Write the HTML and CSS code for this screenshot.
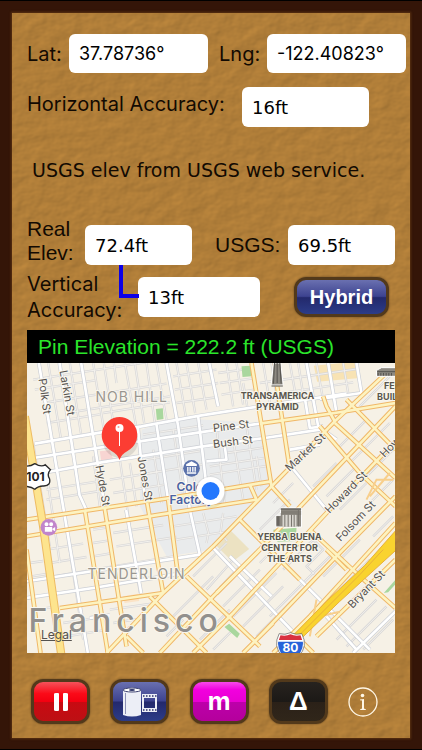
FILE: index.html
```
<!DOCTYPE html>
<html lang="en">
<head>
    <meta charset="UTF-8">
    <meta name="viewport" content="width=device-width, initial-scale=1.0">
    <title>Elevation</title>
    <link rel="stylesheet" href="styles.css">
</head>
<body>
<main class="board">
    <svg class="texture" aria-hidden="true">
        <filter id="leather" x="0" y="0" width="100%" height="100%" color-interpolation-filters="sRGB">
            <feTurbulence type="fractalNoise" baseFrequency="0.06 0.08" numOctaves="3" seed="4" result="noise"/>
            <feDiffuseLighting in="noise" lighting-color="#d99b46" surfaceScale="0.5" diffuseConstant="1">
                <feDistantLight azimuth="225" elevation="54"/>
            </feDiffuseLighting>
        </filter>
        <rect width="100%" height="100%" filter="url(#leather)"/>
    </svg>

    <form class="readings">
        <div class="row row-position">
            <label class="label-lat" for="lat">Lat:</label>
            <input class="system" type="text" id="lat" value="37.78736°" readonly>
            <label class="label-lng" for="lng">Lng:</label>
            <input class="system" type="text" id="lng" value="-122.40823°" readonly>
        </div>
        <div class="row row-horizontal">
            <label for="hacc">Horizontal Accuracy:</label>
            <input type="text" id="hacc" value="16ft" readonly>
        </div>
        <p class="message">USGS elev from USGS web service.</p>
        <div class="row row-elevation">
            <label class="label-real" for="real">Real<br>Elev:</label>
            <input type="text" id="real" value="72.4ft" readonly>
            <label class="label-usgs" for="usgs">USGS:</label>
            <input type="text" id="usgs" value="69.5ft" readonly>
        </div>
        <div class="row row-vertical">
            <span class="connector"></span>
            <label for="vacc">Vertical<br>Accuracy:</label>
            <input type="text" id="vacc" value="13ft" readonly>
            <button type="button" class="btn blue hybrid">Hybrid</button>
        </div>
    </form>

    <div class="pin-bar">Pin Elevation = 222.2 ft (USGS)</div>

    <div class="map">
        <svg class="map-canvas" viewBox="0 0 369 290" preserveAspectRatio="xMidYMid slice" role="img" aria-label="Map of San Francisco">
            <defs>
                <g id="alleys">
                    <path d="M65 0l38 225M130 0l34 215M200 0l32 200M232 0l30 190M262 0l8 60M295 0l34 190M325 0l28 180M360 0l25 180M390 0l30 170M450 0l28 160M480 0l26 150M515 0l25 140M600 0l20 130M630 0l20 125M650 60l12 70M710 0l20 120M735 0l18 115M790 0l20 110M815 0l16 100M870 0l18 100M950 0l15 90"/>
                    <path d="M20 50l390-60M25 80l180-28M50 120l370-58M120 150l310-50M60 180l160-26M230 150l200-32M440 40l130-20M445 80l130-20M450 120l125-18M580 60l100-14M585 95l105-16M700 60l290-42M700 100l280-42M575 30l100-14"/>
                    <path d="M20 240l50 310M60 330l40 270M110 430l60 400M200 280l20 150M280 290l60 400M310 300l20 130M380 260l25 160M440 200l34 220M500 330l20 110M570 190l24 230M620 230l30 180M660 190l30 190M690 280l14 90"/>
                    <path d="M60 380l150-24M60 410l160-26M250 350l160-26M260 390l160-26M370 330l160-26M360 290l160-26M550 310l170-26M550 335l170-26M600 270l110-16M350 215l180-28M60 560l110-18M70 600l110-18M80 640l360-60M260 510l150-24M270 550l180-28M200 500l40-6M200 540l45-7M200 580l60-10M440 490l190-30M450 530l150-24M110 780l90-14M120 820l110-18M250 740l140-20M260 780l100-16M30 740l60-10M10 600l40-6M15 640l45-7"/>
                    <path d="M530 450l16 60-6 30M590 450l-8 60 20 24M500 640l100-100M540 680l80-90 20 20-60 64M500 700l60-60M590 730l110-110M620 760l130-130M440 760l60-60M470 790l90-90M420 820l50-50M650 790l120-120M690 820l140-140M730 760l120-120M520 830l90-90M560 860l60-60M700 600l60-60M770 620l90-90 30 30-50 50 24 24M820 670l90-90M700 500l90-90M740 420l60-60M860 370l70-70M900 400l90-90M940 440l80-80M930 260l90-90M970 300l120-120M1020 340l80-80M1000 130l100-100M890 640l110-110M940 680l90-90M930 830l120-120M960 850l120-120M1010 860l90-90M850 790l60-60M1030 420l70-70M1040 520l60-60"/>
                </g>
                <g id="streets">
                    <path d="M37 0L104 396 184 870M99 0L159 396 179 440M164 0L229 396 234 431M299 441L344 691M334 190L354 396 362 420M420 0L455 190 490 440 520 575M390 185L425 410M515 160L540 370M548 0L575 130M840 0L875 190M905 0L930 150M990 0L1005 90 880 108M835 105L850 195 890 190"/>
                    <path d="M25 242L225 208 345 190 520 158 700 130 960 92M20 285L340 235 540 205 700 182M30 333L225 298 530 250 715 225 880 200M540 295L600 290 595 250M790 260L880 245M0 655L520 575M0 705L200 675 470 630M190 765L250 757"/>
                    <path d="M560 555L860 870M785 300L900 440M820 650L1030 860M735 700L610 580M980 870L1107 745M900 760L990 860M875 190L930 230"/>
                </g>
                <g id="roads">
                    <path d="M0 470L430 405 735 355M0 520L400 455 690 410 670 365M100 735L410 690M700 182L925 150 1107 120M0 560L42 870"/>
                    <path d="M175 440L244 870M234 431L284 751 300 850M362 420L410 690M425 410L455 640M675 0L735 370M752 70L790 320M755 60L745 0"/>
                    <path d="M240 870L410 690 560 550 735 370 930 170 1090 20M400 870L560 700 690 570 850 400 1107 130M500 870L620 750 900 450 1107 235M690 830L920 590 1107 400M650 870L740 780M740 870L850 760 1107 480M870 820L1107 590"/>
                    <path d="M370 700L540 870M480 640L700 850M640 470L820 650M735 370L790 430M850 500L1000 640M880 190L1000 330 1107 430M925 180L1107 345M925 175L900 130 890 100M960 110L1107 260M300 820L350 870M1000 640L1107 735M830 840L860 870M570 690L700 560M900 560L960 620"/>
                </g>
            </defs>
            <g transform="scale(0.33333)">
                <!-- areas -->
                <rect width="1110" height="870" fill="#f6f1e6"/>
                <path fill="#e9ebec" d="M345 200L450 165 700 180 740 360 650 470 560 560 420 580 340 430Z"/>
                <path fill="#f0f0ec" d="M560 560L740 370 820 430 680 600Z"/>
                <path fill="#f8e3b4" d="M862 8l125-12 5 50-120 10z"/>
                <path fill="#ece2c2" d="M610 500l58 58-50 38-48-48z"/>
                <path fill="#f8d5d2" d="M220 265l30-3 10 26-36 5z"/>
                <path fill="#fbe3c6" d="M290 700l45-8 3 22-44 6z"/>
                <use href="#alleys" class="alley-casing"/>
                <use href="#alleys" class="alley-fill"/>
                <path fill="#a9d79e" d="M645 10l27-2 3 32-27 2zM388 138l21-2 2 32-20 3zM594 792l14-10 32 30-8 13zM740 500l70-6-2 40-55 2zM1072 690l35-40v14l-22 24z"/>
                <use href="#streets" class="street-casing"/>
                <use href="#streets" class="street-fill"/>
                <use href="#roads" class="road-casing"/>
                <use href="#roads" class="road-fill"/>
                <!-- main roads -->
                <path class="avenue-casing" d="M-5 160L50 490 105 880"/>
                <path class="avenue" d="M-5 160L50 490 105 880"/>
                <path class="ramp" d="M870 710l-20 110M880 760l60-14M1020 410l30-60 50 0M1030 400l60-70"/>
                <path fill="#f9d32f" stroke="#e8b03a" stroke-width="3" d="M768 850L900 715 1015 607 1110 500V560L940 715 800 850Z"/>
                <path fill="none" stroke="#e8b03a" stroke-width="3" d="M785 850L1000 635 1070 560"/>
                <!-- landmarks -->
                <g fill="#8d8981" stroke="#fff" stroke-width="3">
                    <path d="M741 0h22l7 66h-36z"/>
                    <path d="M1050 22l15-8h45v26h-60z"/>
                    <path d="M748 457h14v-22h63v57h-77z"/>
                </g>
                <path stroke="#55534f" stroke-width="3" fill="none" d="M752 0v60M744 0l-3 62M760 0l4 62M735 69h34M1052 26h55M1055 30v8M1063 30v8M1071 30v8M1079 30v8M1087 30v8M1095 30v8M762 438h62M752 460v28M757 460v28"/>
                <path fill="#d9d6cf" d="M768 455h42v36h-42z"/>
                <path stroke="#77736c" stroke-width="3" d="M775 455v36M785 455v36M795 455v36M803 455v36M764 447h60M762 453h62M816 440v50"/>
                <circle cx="495" cy="316" r="25" fill="#5b72ab"/>
                <path fill="#fff" d="M479 309v-5l16-9 16 9v5zM482 312h4v14h-4zM489 312h4v14h-4zM497 312h4v14h-4zM504 312h4v14h-4zM481 328h28v4h-28z"/>
                <circle cx="67" cy="493" r="25" fill="#c185cb"/>
                <path fill="#fff" d="M55 492h22v14H55zM78 497l8-5v13l-8-5zM54 484a6 6 0 1 0 12 0a6 6 0 1 0-12 0zM68 484a6 6 0 1 0 12 0a6 6 0 1 0-12 0z"/>
                <!-- route shields -->
                <path fill="#fff" stroke="#2b2b2b" stroke-width="4" d="M-20 305Q5 315 25 302Q45 314 56 305L72 320Q60 333 69 347Q74 368 52 369Q36 368 25 379Q10 368-20 370Z"/>
                <path fill="#fff" stroke="#5b5b5b" stroke-width="2" d="M758 812Q776 817 792 809Q808 817 826 812Q846 850 816 880H768Q738 850 758 812Z"/>
                <path fill="#d9303f" d="M762 817Q778 821 792 814Q806 821 822 817L827 831H757Z"/>
                <path fill="#2763d9" d="M755 836H829Q832 860 813 880H771Q752 860 755 836Z"/>
            </g>
            <g class="street-name">
                <text transform="translate(12 16) rotate(82)">Polk St</text>
                <text transform="translate(33 8) rotate(80)">Larkin St</text>
                <text transform="translate(69 103) rotate(80)">Hyde St</text>
                <text transform="translate(111 94) rotate(80)">Jones St</text>
                <text transform="translate(187 69) rotate(-7)">Pine St</text>
                <text transform="translate(187 85) rotate(-7)">Bush St</text>
                <text transform="translate(263 109) rotate(-43)">Market St</text>
                <text transform="translate(303 151) rotate(-45)">Howard St</text>
                <text transform="translate(314 179) rotate(-46)">Folsom St</text>
                <text transform="translate(326 246) rotate(-46)">Bryant St</text>
                <text transform="translate(358 95) rotate(-45)">Howard St</text>
            </g>
            <g class="district">
                <text x="69" y="39">NOB HILL</text>
                <text x="61" y="216">TENDERLOIN</text>
            </g>
            <g class="landmark">
                <text x="251" y="36">TRANSAMERICA</text>
                <text x="251" y="47">PYRAMID</text>
                <text x="263" y="177">YERBA BUENA</text>
                <text x="263" y="188">CENTER FOR</text>
                <text x="263" y="199">THE ARTS</text>
                <text x="372" y="26">FERRY</text>
                <text x="372" y="37">BUILDING</text>
            </g>
            <g class="museum">
                <text x="150" y="128">Color</text>
                <text x="143" y="141">Factory</text>
            </g>
            <text class="route" x="9" y="118">101</text>
            <text class="route light" x="264" y="289">80</text>
            <text class="city" x="2" y="269">Francisco</text>
            <!-- current position -->
            <circle cx="184" cy="129" r="16" fill="#000" opacity="0.06"/>
            <circle cx="184" cy="128" r="14" fill="#fff"/>
            <circle cx="184" cy="128" r="9" fill="#2478fd"/>
            <!-- dropped pin -->
            <ellipse cx="94" cy="80" rx="17" ry="15" fill="#000" opacity="0.1"/>
            <path fill="#fc3d33" d="M93 54a18 18 0 0 1 8 34q-6 3-8 9q-2-6-8-9a18 18 0 0 1 8-34z"/>
            <path stroke="#fff" stroke-width="1" d="M93 68v15"/>
            <circle cx="93" cy="65" r="4" fill="#fff"/>
            <circle cx="92" cy="64" r="1" fill="#fc9a94"/>
        </svg>
        <a class="legal" href="#">Legal</a>
    </div>

    <nav class="toolbar">
        <button type="button" class="btn red" aria-label="Pause">
            <svg width="16" height="20" viewBox="0 0 16 20"><path fill="#fff" d="M3 1h2q1 0 1 1v16q0 1-1 1H3q-2 0-2-1V2q0-1 2-1zM11 1h2q2 0 2 1v16q0 1-2 1h-2q-1 0-1-1V2q0-1 1-1z"/></svg>
        </button>
        <button type="button" class="btn blue" aria-label="Photos">
            <svg width="36" height="30" viewBox="0 0 36 30">
                <path fill="#eceef6" d="M1 3Q10-2 19 3V28Q10 31 1 28Z"/>
                <ellipse cx="10" cy="3" rx="9" ry="2" fill="#fff" stroke="#3c4170"/>
                <ellipse cx="10" cy="3" rx="3" ry="1" fill="#2c3268"/>
                <path stroke="#8b90b5" d="M3.500 6V27"/>
                <path fill="#eceef6" fill-rule="evenodd" d="M20 7H35V25H20ZM22 11V21H33V11Z"/>
                <path stroke="#2c3268" stroke-width="1.500" stroke-dasharray="1.500 1.500" d="M21 9H35M21 23H35"/>
            </svg>
        </button>
        <button type="button" class="btn magenta">m</button>
        <button type="button" class="btn black">Δ</button>
        <button type="button" class="info" aria-label="Info">
            <svg width="30" height="30" viewBox="0 0 30 30">
                <circle cx="15" cy="15" r="14" fill="none" stroke="#fff7e6" stroke-width="1.300"/>
                <circle cx="14.500" cy="8.500" r="1.800" fill="#fff7e6"/>
                <path fill="#fff7e6" d="M12 12.500L16 12V21.500L18 22.500V23H12V22.500L14 21.500V13.500L12 13.200Z"/>
            </svg>
        </button>
    </nav>
</main>
</body>
</html>
```
FILE: styles.css
```
*, *:before, *:after {
    box-sizing: border-box;
}

body {
    display: flex;
    min-height: 100vh;
    margin: 0;
    padding: 12px 12px 11px;
    border-top: 1px solid #000000;
    border-bottom: 1px solid #000000;
    background-color: #341508;
    color: #120a02;
    font-family: 'Liberation Sans', Arial, sans-serif;
    font-size: 21px;
}

.board {
    position: relative;
    flex: 1;
    min-width: 0;
    padding: 21px 15px 14px;
    background-color: #b07d38;
    box-shadow: 0 0 2px 1px #5a3212;
}

.texture {
    position: absolute;
    top: 0;
    left: 0;
    width: 100%;
    height: 100%;
}

.readings, .pin-bar, .map, .toolbar {
    position: relative;
}

/* readings */

.row {
    display: flex;
    align-items: center;
}

.row input {
    flex: 1;
    min-width: 0;
    height: 40px;
    padding: 0 10px;
    border: none;
    border-radius: 6px;
    background-color: #ffffff;
    color: #000000;
    font-family: 'DejaVu Sans', Verdana, sans-serif;
    font-size: 18px;
}

.row input.system {
    height: 39px;
    font-family: Inter, sans-serif;
}

.row-position {
    margin-right: -11px;
}

.row-position, .row-horizontal, .row-vertical {
    font-family: Inter, sans-serif;
    font-size: 20px;
}

.label-lat {
    width: 42px;
}

.label-lng {
    width: 48px;
    margin-left: 11px;
}

.row-horizontal {
    margin-top: 14px;
    padding-right: 26px;
    align-items: flex-start;
}

.row-horizontal label {
    width: 215px;
    line-height: 34px;
}

.message {
    margin: 31px 0 35px;
    padding-left: 5px;
    font-family: 'DejaVu Sans', Verdana, sans-serif;
    font-size: 19px;
    line-height: 24px;
    white-space: nowrap;
}

.row-elevation {
    align-items: flex-end;
    line-height: 24px;
}

.label-real {
    width: 58px;
}

.label-usgs {
    width: 73px;
    margin-left: 23px;
    line-height: 40px;
}

.row-vertical {
    position: relative;
    margin-top: 6px;
    padding-right: 6px;
    line-height: 26px;
}

.row-vertical label {
    width: 111px;
}

.connector {
    position: absolute;
    top: -6px;
    left: 92px;
    width: 20px;
    height: 33px;
    border-left: 4px solid #0c00e8;
    border-bottom: 4px solid #0c00e8;
}

/* glossy buttons */

.btn {
    display: flex;
    align-items: center;
    justify-content: center;
    width: 59px;
    height: 45px;
    padding: 0;
    border: 3px solid #52391b;
    border-radius: 12px;
    box-shadow: 0 0 2px #5f431f;
    color: #ffffff;
    font-family: 'Liberation Sans', Arial, sans-serif;
    font-size: 26px;
    font-weight: bold;
    cursor: pointer;
}

.blue {
    background: linear-gradient(#6a70b0, #3d4390 48%, #23296c 52%, #2c3c88);
}

.red {
    background: linear-gradient(#f5525a, #fb0a18 30%, #f30010 50%, #c80a12 52%, #bd1014);
}

.magenta {
    background: linear-gradient(#f84aea, #f200de 20%, #e800d2 50%, #bd00aa 52%, #b4009c);
}

.black {
    background: linear-gradient(#27231f, #1c1916 50%, #2b2118 52%, #30261a);
}

.hybrid {
    width: 95px;
    height: 40px;
    margin-left: 34px;
    font-size: 20px;
}

/* map */

.pin-bar {
    margin-top: 7px;
    padding-left: 11px;
    background-color: #000000;
    color: #2be52b;
    line-height: 33px;
    white-space: nowrap;
}

.map {
    height: 290px;
    overflow: hidden;
}

.map-canvas {
    display: block;
    width: 100%;
    height: 100%;
    font-family: Inter, sans-serif;
}

.map-canvas text {
    paint-order: stroke;
    stroke: #f9f6ee;
    stroke-width: 2px;
    stroke-linejoin: round;
}

.map-canvas use {
    fill: none;
    stroke-linejoin: round;
}

.alley-casing {
    stroke: #d8d7d7;
    stroke-width: 7px;
}

.alley-fill {
    stroke: #f3f1ed;
    stroke-width: 3px;
}

.street-casing {
    stroke: #cccfd5;
    stroke-width: 12px;
}

.street-fill {
    stroke: #ffffff;
    stroke-width: 8px;
}

.road-casing {
    stroke: #f0b767;
    stroke-width: 14px;
}

.road-fill {
    stroke: #fdf3c0;
    stroke-width: 8px;
}

.avenue-casing, .avenue {
    fill: none;
    stroke: #eebb62;
    stroke-width: 25px;
}

.avenue {
    stroke: #fde48e;
    stroke-width: 19px;
}

.ramp {
    fill: none;
    stroke: #f8cf8c;
    stroke-width: 6px;
}

.street-name {
    fill: #55524f;
    font-size: 11px;
}

.district {
    fill: #9a9690;
    font-size: 14px;
    letter-spacing: 1px;
}

.landmark {
    fill: #5a564e;
    font-size: 9px;
    font-weight: bold;
    text-anchor: middle;
}

.museum {
    fill: #4a62a2;
    font-size: 12px;
    font-weight: 600;
}

.map-canvas .route {
    fill: #222222;
    stroke: none;
    font-size: 12px;
    font-weight: bold;
    text-anchor: middle;
}

.map-canvas .light {
    fill: #ffffff;
}

.city {
    fill: #92908d;
    font-size: 32px;
    font-weight: 500;
    letter-spacing: 5px;
}

.legal {
    position: absolute;
    bottom: 10px;
    left: 14px;
    color: #55524f;
    font-family: Inter, sans-serif;
    font-size: 12px;
    line-height: 16px;
}

/* toolbar */

.toolbar {
    display: flex;
    align-items: center;
    justify-content: space-between;
    margin-top: 26px;
    padding: 0 17px 0 4px;
}

.info {
    display: flex;
    padding: 0;
    border: none;
    background: none;
    cursor: pointer;
}
```
